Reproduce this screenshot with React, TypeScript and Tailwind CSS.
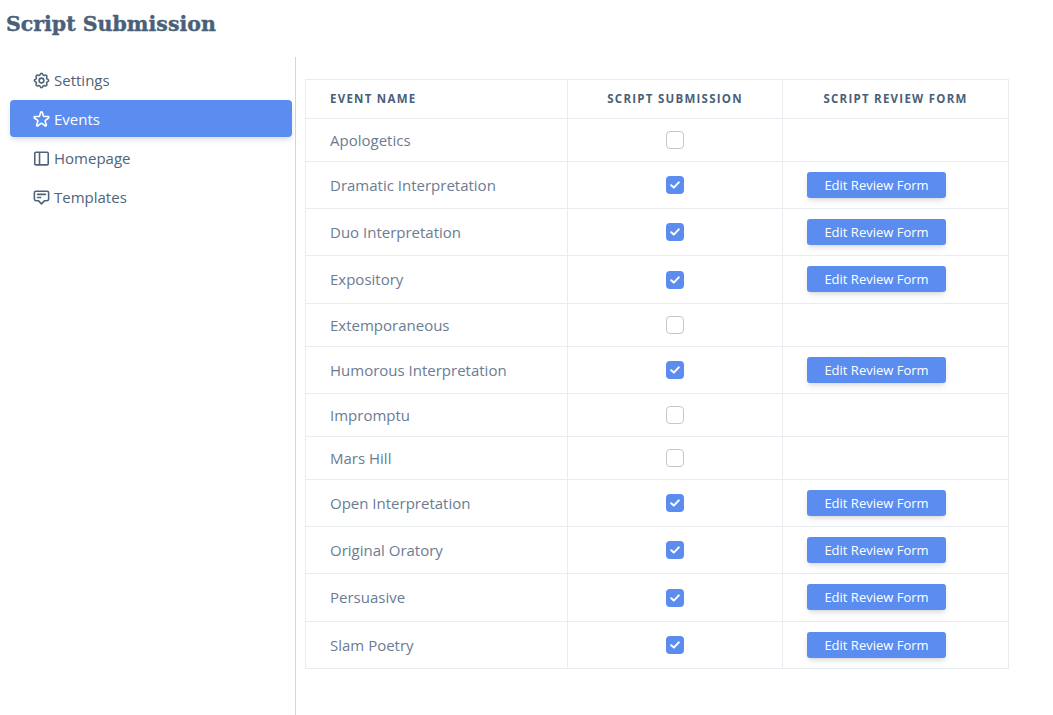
import { HiOutlineCog, HiOutlineStar, HiOutlineAnnotation } from "react-icons/hi";

const rows: { name: string; on: boolean; tall?: boolean }[] = [
  { name: "Apologetics", on: false },
  { name: "Dramatic Interpretation", on: true },
  { name: "Duo Interpretation", on: true },
  { name: "Expository", on: true, tall: true },
  { name: "Extemporaneous", on: false },
  { name: "Humorous Interpretation", on: true },
  { name: "Impromptu", on: false },
  { name: "Mars Hill", on: false },
  { name: "Open Interpretation", on: true },
  { name: "Original Oratory", on: true },
  { name: "Persuasive", on: true, tall: true },
  { name: "Slam Poetry", on: true },
];

function PanelIcon({ size }: { size: number }) {
  return (
    <svg width={size} height={size} viewBox="0 0 24 24" fill="none" stroke="currentColor" strokeWidth={2} strokeLinejoin="round">
      <rect x="3.5" y="4" width="17" height="16" rx="1.5" />
      <path d="M9.5 4v16" />
    </svg>
  );
}

function CheckMark() {
  return (
    <svg width="10" height="8" viewBox="0 0 10 8" fill="none" stroke="currentColor" strokeWidth={2} strokeLinecap="round" strokeLinejoin="round">
      <path d="M1.2 4.2 3.8 6.6 8.8 1.4" />
    </svg>
  );
}

const nav = [
  { label: "Settings", Icon: HiOutlineCog },
  { label: "Events", Icon: HiOutlineStar },
  { label: "Homepage", Icon: PanelIcon },
  { label: "Templates", Icon: HiOutlineAnnotation },
];

export default function App() {
  return (
    <div className="h-[715px] w-[1053px] overflow-hidden bg-white font-['Open_Sans',sans-serif] text-[#4a5f78]">
      <h1 className="h-[57px] pl-[6px] pt-[9px] font-['DejaVu_Serif',serif] text-[20.5px] font-bold leading-[30px] text-[#4a5f78] [-webkit-text-stroke:0.4px_#4a5f78]">
        Script Submission
      </h1>
      <div className="flex h-[658px]">
        <nav className="flex w-[296px] flex-col gap-[2px] border-r border-[#d4d6d9] pl-[10px] pr-[3px] pt-[4px]">
          {nav.map(({ label, Icon }) => {
            const active = label === "Events";
            return (
              <div
                key={label}
                className={
                  active
                    ? "flex h-[37px] items-center gap-[3px] rounded bg-[#5a8def] pl-[22px] pt-[2px] text-[15px] text-white shadow-md"
                    : "flex h-[37px] items-center gap-[3px] rounded pl-[22px] pt-[2px] text-[15px] text-[#4f6379]"
                }
              >
                <Icon size={19} />
                <span>{label}</span>
              </div>
            );
          })}
        </nav>
        <div className="pl-[9px] pt-[22px]">
          <table className="w-[703px] table-fixed border-collapse border border-[#e8ebef]">
            <colgroup>
              <col className="w-[262px]" />
              <col className="w-[215px]" />
              <col className="w-[226px]" />
            </colgroup>
            <thead>
              <tr className="h-[39px] border-b border-[#e8ebef]">
                <th className="border-r border-[#e8ebef] pl-[24px] text-left text-[11.5px] font-bold tracking-[1.25px] text-[#4a5f78]">
                  EVENT NAME
                </th>
                <th className="border-r border-[#e8ebef] text-center text-[11.5px] font-bold tracking-[1.25px] text-[#4a5f78]">
                  SCRIPT SUBMISSION
                </th>
                <th className="text-center text-[11.5px] font-bold tracking-[1.25px] text-[#4a5f78]">
                  SCRIPT REVIEW FORM
                </th>
              </tr>
            </thead>
            <tbody>
              {rows.map(({ name, on, tall }) => (
                <tr
                  key={name}
                  className={tall ? "h-[48px] border-b border-[#e8ebef]" : on ? "h-[47px] border-b border-[#e8ebef]" : "h-[43px] border-b border-[#e8ebef]"}
                >
                  <td className="border-r border-[#e8ebef] pl-[24px] text-[15px] text-[#6b7c93]">{name}</td>
                  <td className="border-r border-[#e8ebef]">
                    <div className="flex justify-center">
                      {on ? (
                        <span className="flex h-[18px] w-[18px] items-center justify-center rounded-[4px] bg-[#5a8def] text-white">
                          <CheckMark />
                        </span>
                      ) : (
                        <span className="h-[18px] w-[18px] rounded-[4px] border border-[#c3c8cf] bg-white" />
                      )}
                    </div>
                  </td>
                  <td className="pl-[24px] pt-[10px] align-top">
                    {on && (
                      <button className="block h-[26px] w-[139px] rounded-[3px] bg-[#5a8def] pt-[1px] text-center text-[13px] font-medium text-white shadow-md">
                        Edit Review Form
                      </button>
                    )}
                  </td>
                </tr>
              ))}
            </tbody>
          </table>
        </div>
      </div>
    </div>
  );
}
